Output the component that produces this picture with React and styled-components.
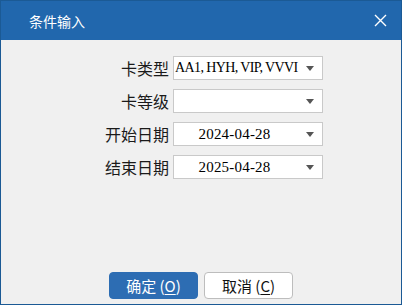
import React from "react"
import styled, { createGlobalStyle } from "styled-components"

const GlobalStyle = createGlobalStyle`
  html, body {
    margin: 0;
    padding: 0;
    background: #f0f0f0;
  }
  * {
    box-sizing: border-box;
  }
`

const Window = styled.div`
  width: 402px;
  height: 305px;
  border: 1px solid #1b5a95;
  display: flex;
  flex-direction: column;
  background: #f0f0f0;
  font-family: "Noto Sans CJK SC", "Noto Sans", sans-serif;
`

const TitleBar = styled.div`
  height: 39px;
  background: #2167ad;
  color: #fff;
  display: flex;
  align-items: center;
  justify-content: space-between;
  padding: 0 14px 0 28px;
  font-size: 14px;
`

const Close = styled.svg`
  width: 13px;
  height: 13px;
`

const Body = styled.div`
  flex: 1;
  display: flex;
  flex-direction: column;
  justify-content: space-between;
  padding: 16px 0 5px 0;
`

const Form = styled.div`
  display: grid;
  grid-template-columns: 68px 150px;
  column-gap: 4px;
  row-gap: 9px;
  padding-left: 100px;
`

const Label = styled.div`
  text-align: right;
  font-size: 16px;
  line-height: 24px;
  color: #1a1a1a;
  white-space: nowrap;
`

const Combo = styled.div`
  height: 24px;
  border: 1px solid #c9c9c9;
  background: #fff;
  display: flex;
  align-items: center;
  padding: 0 8px 0 1px;
`

const ComboText = styled.div`
  flex: 1;
  font-family: "Liberation Serif", "Noto Sans CJK SC", serif;
  font-size: ${(p) => (p.$center ? "15px" : "14px")};
  color: #000;
  white-space: nowrap;
  overflow: hidden;
  text-align: ${(p) => (p.$center ? "center" : "left")};
  letter-spacing: ${(p) => (p.$center ? "0.2px" : "-0.6px")};
  padding-right: ${(p) => (p.$center ? "8px" : "0")};
`

const Arrow = styled.div`
  width: 0;
  height: 0;
  flex-shrink: 0;
  margin-left: 4px;
  border-left: 4.5px solid transparent;
  border-right: 4.5px solid transparent;
  border-top: 5px solid #555;
`

const Footer = styled.div`
  display: flex;
  justify-content: center;
  gap: 6px;
`

const Button = styled.button`
  width: 89px;
  height: 27px;
  border-radius: 4px;
  font-family: "Noto Sans CJK SC", "Noto Sans", sans-serif;
  font-size: 15px;
  padding: 0;
  cursor: pointer;
  background: ${(p) => (p.$primary ? "#2d6db3" : "#fff")};
  color: ${(p) => (p.$primary ? "#fff" : "#111")};
  border: 1px solid ${(p) => (p.$primary ? "#2d6db3" : "#bdbdbd")};
  u {
    text-underline-offset: 2px;
  }
`

const Field = ({ label, value, center }) => (
  <>
    <Label>{label}</Label>
    <Combo>
      <ComboText $center={center}>{value}</ComboText>
      <Arrow />
    </Combo>
  </>
)

export default function App() {
  return (
    <>
      <GlobalStyle />
      <Window>
        <TitleBar>
          <span>条件输入</span>
          <Close viewBox="0 0 13 13">
            <path d="M1 1L12 12M12 1L1 12" stroke="#fff" strokeWidth="1.4" fill="none" />
          </Close>
        </TitleBar>
        <Body>
          <Form>
            <Field label="卡类型" value="AA1, HYH, VIP, VVVI" />
            <Field label="卡等级" value="" />
            <Field label="开始日期" value="2024-04-28" center />
            <Field label="结束日期" value="2025-04-28" center />
          </Form>
          <Footer>
            <Button $primary>
              确定 (<u>O</u>)
            </Button>
            <Button>
              取消 (<u>C</u>)
            </Button>
          </Footer>
        </Body>
      </Window>
    </>
  )
}
